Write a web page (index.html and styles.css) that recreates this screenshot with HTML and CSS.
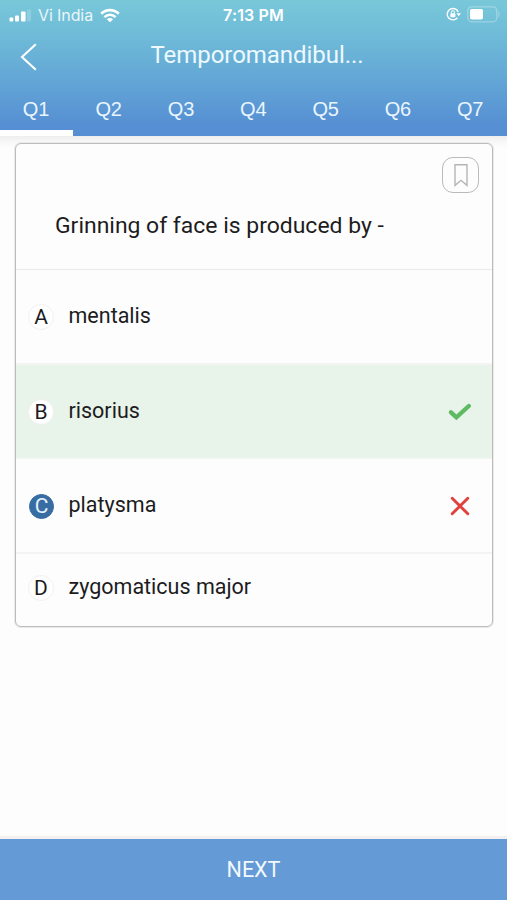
FILE: index.html
```html
<!DOCTYPE html>
<html lang="en">
<head>
<meta charset="utf-8">
<meta name="viewport" content="width=device-width">
<title>Quiz</title>
<link rel="stylesheet" href="styles.css">
</head>
<body>
<header class="header">
  <div class="status">
    <div class="carrier">
      <svg width="22" height="14" viewBox="0 0 22 14" fill="#fff"><rect x=".5" y="9.5" width="3.8" height="4" rx="1"/><rect x="6" y="7.5" width="4" height="6" rx="1"/><rect x="12" y="3.5" width="4.6" height="10" rx="1"/><rect x="18" y="1.5" width="4" height="12" rx="1" opacity=".2"/></svg>
      <span class="network">Vi India</span>
      <svg class="wifi" width="20" height="15" viewBox="0 0 20 15" fill="none" stroke="#fff" stroke-width="2.6"><path d="M1.2 5.8C6.3.9 13.7.9 18.8 5.8"/><path d="M4.4 9.1C7.8 6 12.2 6 15.6 9.1"/><path d="M10 14.2 6.9 11.2Q10 8.8 13.1 11.2Z" fill="#fff" stroke="none"/></svg>
    </div>
    <span class="time">7:13 PM</span>
    <div class="power">
      <svg width="15" height="14" viewBox="0 0 15 14" fill="none" stroke="#fff" stroke-width="1.4"><path d="M11.4 10.7A5.7 5.7 0 1 1 12.2 5"/><path d="M10.5 6.2H15L12.7 9.3Z" fill="#fff" stroke="none"/><rect x="4.4" y="6.3" width="5" height="4" rx=".7" fill="#fff" stroke="none"/><path d="M5.4 6.5V5.2a1.5 1.5 0 0 1 3 0v1.3" stroke-width="1"/></svg>
      <svg width="33" height="17" viewBox="0 0 33 17" fill="none"><rect x=".8" y=".8" width="29" height="15" rx="4" stroke="#fff" stroke-opacity=".3" stroke-width="1.3"/><rect x="3" y="3" width="13" height="10.5" rx="1.8" fill="#fff"/><path d="M31.5 5.8q1.4 2.5 0 5" stroke="#fff" stroke-opacity=".35"/></svg>
    </div>
  </div>
  <div class="titlebar">
    <svg class="back" width="18" height="28" viewBox="0 0 18 28" fill="none" stroke="#fff" stroke-width="2.1"><path d="M15.8 1.2 2 14 15.8 26.8"/></svg>
    <h1 class="title">Temporomandibul...</h1>
  </div>
  <nav class="tabs">
    <span class="tab active">Q1</span><span class="tab">Q2</span><span class="tab">Q3</span><span class="tab">Q4</span><span class="tab">Q5</span><span class="tab">Q6</span><span class="tab">Q7</span>
  </nav>
</header>
<main class="content">
  <section class="card">
    <div class="question">
      <button class="bookmark" aria-label="Bookmark"><svg width="16" height="25" viewBox="0 0 16 25" fill="none" stroke="#b5b5b5" stroke-width="1.4"><path d="M2 1.7H14V22.4L8 17.3 2 22.4Z"/></svg></button>
      <p class="prompt">Grinning of face is produced by -</p>
    </div>
    <div class="option"><span class="letter">A</span><span class="answer">mentalis</span></div>
    <div class="option correct"><span class="letter">B</span><span class="answer">risorius</span>
      <svg class="mark" width="24" height="20" viewBox="0 0 24 20" fill="none" stroke="#5fbb61" stroke-width="4.3" stroke-linecap="round"><path d="M3 10.3 8.4 15.3 20.8 4"/></svg></div>
    <div class="option chosen"><span class="letter">C</span><span class="answer">platysma</span>
      <svg class="mark" width="24" height="20" viewBox="0 0 24 20" fill="none" stroke="#df413c" stroke-width="2.9" stroke-linecap="round"><path d="M4.2 2.2 19.8 17.8M19.8 2.2 4.2 17.8"/></svg></div>
    <div class="option last"><span class="letter">D</span><span class="answer">zygomaticus major</span></div>
  </section>
</main>
<button class="next">NEXT</button>
</body>
</html>
```
FILE: styles.css
```css
* { box-sizing: border-box; }
body {
  margin: 0;
  height: 900px;
  display: flex;
  flex-direction: column;
  overflow: hidden;
  background: #fdfdfd;
  font-family: Roboto, sans-serif;
  color: #1c1c1e;
}
svg { display: block; flex: none; }
.header {
  height: 136px;
  flex: none;
  background: linear-gradient(#78c8d9 0, #70bdd8 30px, #64a9d6 75px, #568fd3 125px, #558fd2 136px);
  color: #fff;
}
.status {
  height: 30px;
  padding: 0 7px 0 9px;
  display: grid;
  grid-template-columns: 1fr auto 1fr;
  align-items: center;
  font-family: Inter, sans-serif;
  font-size: 16px;
}
.carrier { display: flex; align-items: center; }
.network { margin-left: 7px; letter-spacing: -.1px; opacity: .85; }
.wifi { margin-left: 7px; }
.time { margin-right: 2px; font-weight: 600; font-size: 16px; letter-spacing: .15px; }
.power { display: flex; align-items: center; justify-content: flex-end; gap: 6px; margin-top: -2px; }
.titlebar {
  height: 54px;
  padding: 0 20px;
  display: grid;
  grid-template-columns: 18px 1fr 18px;
  align-items: center;
}
.title {
  margin: -5px 0 0 7px;
  text-align: center;
  font-size: 24px;
  font-weight: 400;
  letter-spacing: -.05px;
  color: #edf9ff;
}
.tabs { display: grid; grid-template-columns: 73px repeat(6, 72.3px); height: 52px; }
.tab {
  display: flex;
  align-items: center;
  justify-content: center;
  padding: 4px 1px 0 0;
  font-family: "Liberation Sans", sans-serif;
  font-size: 20px;
  letter-spacing: -.2px;
  color: #eaf5ff;
  border-bottom: 6px solid transparent;
}
.active { border-bottom-color: #fff; }
.content {
  flex: 1;
  padding: 7px 14px 0 15px;
  background: linear-gradient(#eee 0, #f9f9f9 7px, #fdfdfd 12px);
}
.card {
  height: 484px;
  border: 1px solid #bdbdbd;
  border-radius: 6px;
  box-shadow: 0 0 0 1px #e9e9e9;
  overflow: hidden;
  background: #fdfdfd;
}
.question {
  height: 126px;
  border-bottom: 1px solid #ebebeb;
  padding: 13px 13px 0 39px;
}
.bookmark {
  display: flex;
  align-items: center;
  justify-content: center;
  width: 37px;
  height: 36px;
  margin-left: auto;
  padding: 0;
  border: 1px solid #bababa;
  border-radius: 11px;
  background: none;
}
.prompt { margin: 18px 0 0; font-size: 22.95px; line-height: 30px; white-space: nowrap; }
.option {
  height: 94.5px;
  padding: 0 20px 0 12px;
  display: flex;
  align-items: center;
  border-bottom: 2px solid #f4f4f4;
}
.correct { background: #e8f3e9; border-bottom-color: #eef5ee; }
.last { height: 66px; border-bottom: 0; }
.letter {
  width: 26px;
  height: 26px;
  margin-top: 2px;
  border: 1px solid #f1f1f1;
  border-radius: 50%;
  background: #fff;
  display: flex;
  align-items: center;
  justify-content: center;
  font-size: 21px;
}
.chosen .letter { width: 25px; height: 25px; margin-left: 1px; background: #386da3; border-color: #386da3; color: #e4f3ff; }
.answer { margin: -1px 0 0 14.5px; font-size: 21.5px; }
.mark { margin: 2px 0 0 auto; }
.next {
  height: 64px;
  flex: none;
  border: 0;
  border-top: 3px solid transparent;
  padding: 0;
  background: linear-gradient(#649ad5, #649ad5) padding-box, linear-gradient(#f4f0ef 3px, #649ad5 3px) border-box;
  color: #f2f9ff;
  font: 21.5px Roboto, sans-serif;
}
```
